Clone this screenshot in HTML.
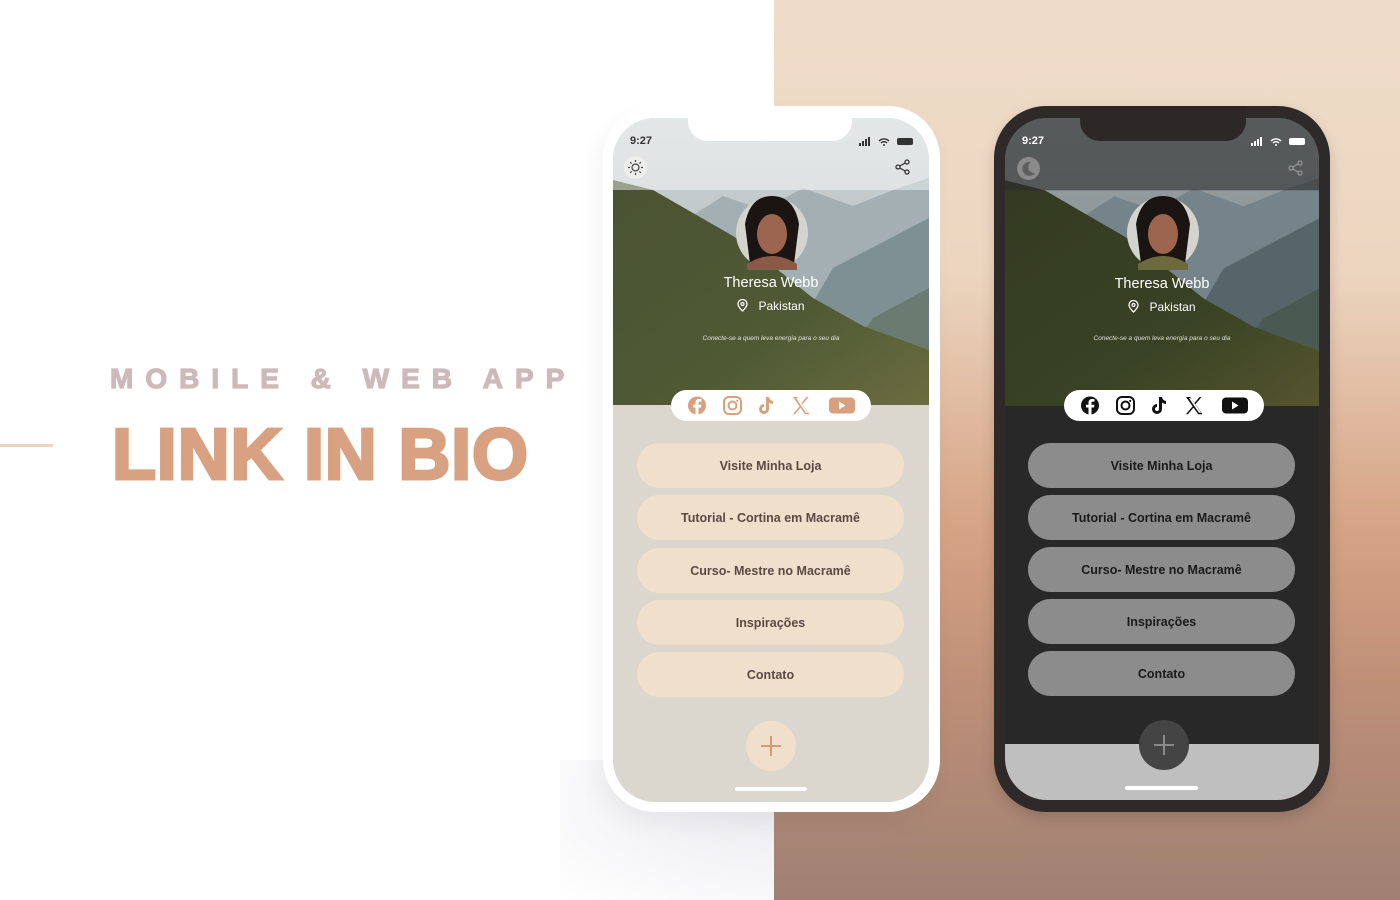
<!DOCTYPE html>
<html><head><meta charset="utf-8"><style>
*{margin:0;padding:0;box-sizing:border-box}
body{width:1400px;height:900px;position:relative;overflow:hidden;background:#fff;font-family:"Liberation Sans",sans-serif}
.abs{position:absolute}
.rp{left:774px;top:0;width:626px;height:900px;background:linear-gradient(180deg,#eedcc8 0%,#ecd6c0 30%,#d6a486 58%,#c09078 75%,#9f8173 100%)}
.shadowL{left:560px;top:760px;width:214px;height:140px;background:radial-gradient(ellipse at 100% 30%,#ecebee 0%,#f3f2f5 40%,#fff 100%)}
.frame{border-radius:52px}
.btn{position:absolute;height:45px;border-radius:23px;font-size:12.5px;font-weight:bold;display:flex;align-items:center;justify-content:center}
.l .btn{background:#f0dfcb;color:#5a4a44;left:24px;width:267px}
.d .btn{background:#8c8c8c;color:#1a1a1a;left:23px;width:267px}
.screen{overflow:hidden;border-radius:42px}
.name{position:absolute;width:100%;text-align:center;color:#fff;font-size:14.5px;top:157px}
.loc{position:absolute;width:100%;text-align:center;color:#fff;font-size:12px;top:181px}
.tag{position:absolute;width:100%;text-align:center;color:#f2f2f2;font-size:6.5px;font-style:italic;top:217px;opacity:.9}
.time{position:absolute;left:17px;top:17px;font-size:11px;font-weight:bold}
</style></head><body>
<div class="abs rp"></div>
<div class="abs shadowL"></div>

<div class="abs" style="left:0;top:444px;width:53px;height:3px;background:#efd2bf"></div>
<div class="abs" style="left:110px;top:364px;font-size:28px;line-height:30px;font-weight:bold;letter-spacing:12px;color:#cdb9b9;white-space:nowrap;-webkit-text-stroke:1.2px #cdb9b9">MOBILE &amp; WEB APP</div>
<div class="abs" style="left:112px;top:418px;font-size:72px;line-height:74px;font-weight:bold;letter-spacing:0.8px;color:#d8a181;white-space:nowrap;-webkit-text-stroke:3px #d8a181">LINK IN BIO</div>

<!-- LIGHT PHONE -->
<div class="abs frame" style="left:603px;top:106px;width:337px;height:706px;background:#fff;box-shadow:-6px 12px 24px rgba(0,0,0,.05)"></div>
<div class="abs screen l" style="left:613px;top:118px;width:316px;height:684px;background:#dbd7ce">
<svg class="abs" style="left:0;top:0" width="316" height="287" viewBox="0 0 316 287" preserveAspectRatio="none">
<defs><linearGradient id="sk" x1="0" y1="0" x2="0" y2="1"><stop offset="0" stop-color="#ced3d3"/><stop offset="1" stop-color="#a8b4b8"/></linearGradient>
<linearGradient id="fo" x1="0" y1="0" x2="1" y2="1"><stop offset="0" stop-color="#4a5233"/><stop offset=".6" stop-color="#4f5a34"/><stop offset="1" stop-color="#6b6c40"/></linearGradient></defs>
<rect width="316" height="287" fill="url(#sk)"/>
<polygon points="60,110 110,78 150,92 190,70 240,88 280,72 316,60 316,287 60,287" fill="#a3afb3"/>
<polygon points="140,287 220,150 316,100 316,287" fill="#7e9094"/>
<polygon points="200,287 260,200 316,170 316,287" fill="#6a7c72"/>
<polygon points="0,62 40,72 80,95 120,118 160,148 200,180 250,208 316,232 316,287 0,287" fill="url(#fo)"/>
<rect width="316" height="72" fill="#fff" opacity=".45"/>
</svg>
<div class="time" style="color:#333">9:27</div>
<svg class="abs" style="left:246px;top:19px" width="58" height="10"><rect x="0" y="6" width="2" height="3" fill="#333"/><rect x="3" y="4" width="2" height="5" fill="#333"/><rect x="6" y="2" width="2" height="7" fill="#333"/><rect x="9" y="0" width="2" height="9" fill="#333"/><path d="M20 4a7 7 0 0 1 10 0M22 6a4 4 0 0 1 6 0" stroke="#333" stroke-width="1.4" fill="none"/><circle cx="25" cy="8" r="1" fill="#333"/><rect x="38" y="1" width="16" height="7" rx="2" fill="#333"/></svg>
<div class="abs" style="left:11px;top:38px;width:23px;height:23px;border-radius:50%;background:#eeeeec"></div>
<svg class="abs" style="left:13px;top:40px" width="19" height="19" viewBox="0 0 19 19" stroke="#444" stroke-width="1.2" fill="none"><circle cx="9.5" cy="9.5" r="3.5"/><path d="M9.5 2v2M9.5 15v2M2 9.5h2M15 9.5h2M4.2 4.2l1.4 1.4M13.4 13.4l1.4 1.4M4.2 14.8l1.4-1.4M13.4 5.6l1.4-1.4"/></svg>
<svg class="abs" style="left:282px;top:41px" width="16" height="16" viewBox="0 0 16 16" stroke="#333" stroke-width="1.3" fill="none"><circle cx="12" cy="3" r="2"/><circle cx="3" cy="8" r="2"/><circle cx="12" cy="13" r="2"/><path d="M5 7l5-3M5 9l5 3"/></svg>
<svg class="abs" style="left:122px;top:76px" width="74" height="76" viewBox="0 0 74 76"><circle cx="37" cy="39" r="36" fill="#d3d4cd"/><path d="M10 30q5-28 27-28t27 28l-5 40h-44z" fill="#1a1412"/><ellipse cx="37" cy="40" rx="15" ry="20" fill="#9b6550"/><path d="M12 70q25-16 50 0v6h-50z" fill="#8a5a48"/></svg>
<div class="name">Theresa Webb</div>
<div class="loc"><svg width="11" height="13" viewBox="0 0 11 13" style="vertical-align:-2px;margin-right:10px"><path d="M5.5 12s-4.5-4-4.5-7a4.5 4.5 0 0 1 9 0c0 3-4.5 7-4.5 7z" stroke="#fff" stroke-width="1.3" fill="none"/><circle cx="5.5" cy="5" r="1.5" stroke="#fff" stroke-width="1.2" fill="none"/></svg>Pakistan</div>
<div class="tag">Conecte-se a quem leva energia para o seu dia</div>
<div class="abs" style="left:58px;top:272px;width:200px;height:31px;border-radius:16px;background:#fff"></div>
<svg class="abs" style="left:58px;top:272px" width="200" height="31" viewBox="0 0 200 31">
<g fill="#d9a07e"><circle cx="26" cy="15.5" r="9"/><path d="M27.5 24.5v-7h2.5l.4-2.8h-2.9v-1.8c0-.8.3-1.3 1.4-1.3h1.6v-2.5a18 18 0 0 0-2.3-.1c-2.3 0-3.7 1.3-3.7 3.8v1.9h-2.5v2.8h2.5v7z" fill="#fff"/>
<rect x="53" y="7" width="17" height="17" rx="5" fill="none" stroke="#d9a07e" stroke-width="2"/><circle cx="61.5" cy="15.5" r="4" fill="none" stroke="#d9a07e" stroke-width="2"/><circle cx="66.2" cy="10.8" r="1.1"/>
<path d="M95 7h3a4.5 4.5 0 0 0 4 4v3a7 7 0 0 1-4-1.4v6.4a5 5 0 1 1-5-5v3a2 2 0 1 0 2 2z"/>
<path d="M122 7h4.2l4.3 6 5-6h2l-6.1 7.2 7 10h-4.2l-4.7-6.6-5.6 6.6h-2l6.7-7.8z M125 8.2h2l10 14.6h-2z" fill-rule="evenodd"/>
<rect x="158" y="7.5" width="26" height="16" rx="4"/><path d="M168 11.5v8l6.5-4z" fill="#fff"/></g>
</svg>
<div class="btn" style="top:325px">Visite Minha Loja</div>
<div class="btn" style="top:377px">Tutorial - Cortina em Macramê</div>
<div class="btn" style="top:430px">Curso- Mestre no Macramê</div>
<div class="btn" style="top:482px">Inspirações</div>
<div class="btn" style="top:534px">Contato</div>
<div class="abs" style="left:133px;top:603px;width:50px;height:50px;border-radius:50%;background:#f0dfcb"></div>
<div class="abs" style="left:148px;top:627px;width:20px;height:2px;background:#d49a78"></div>
<div class="abs" style="left:157px;top:618px;width:2px;height:20px;background:#d49a78"></div>
<div class="abs" style="left:122px;top:669px;width:72px;height:4px;border-radius:2px;background:#fff"></div>
</div>
<div class="abs" style="left:688px;top:106px;width:164px;height:35px;background:#fff;border-radius:0 0 20px 20px"></div>

<!-- DARK PHONE -->
<div class="abs frame" style="left:994px;top:106px;width:336px;height:706px;background:#2e2a2a;box-shadow:0 6px 14px rgba(0,0,0,.15)"></div>
<div class="abs screen d" style="left:1005px;top:118px;width:314px;height:682px;background:#282828">
<svg class="abs" style="left:0;top:0" width="314" height="288" viewBox="0 0 316 287" preserveAspectRatio="none">
<defs><linearGradient id="sk2" x1="0" y1="0" x2="0" y2="1"><stop offset="0" stop-color="#9aa2a4"/><stop offset="1" stop-color="#78858a"/></linearGradient>
<linearGradient id="fo2" x1="0" y1="0" x2="1" y2="1"><stop offset="0" stop-color="#333a22"/><stop offset=".6" stop-color="#394224"/><stop offset="1" stop-color="#55552f"/></linearGradient></defs>
<rect width="316" height="287" fill="url(#sk2)"/>
<polygon points="60,110 110,78 150,92 190,70 240,88 280,72 316,60 316,287 60,287" fill="#75838a"/>
<polygon points="140,287 220,150 316,100 316,287" fill="#55656a"/>
<polygon points="200,287 260,200 316,170 316,287" fill="#4a5a52"/>
<polygon points="0,62 40,72 80,95 120,118 160,148 200,180 250,208 316,232 316,287 0,287" fill="url(#fo2)"/>
<rect width="316" height="72" fill="#2b2b2b" opacity=".6"/>
</svg>
<div class="time" style="color:#fff">9:27</div>
<svg class="abs" style="left:246px;top:19px" width="58" height="10"><rect x="0" y="6" width="2" height="3" fill="#fff"/><rect x="3" y="4" width="2" height="5" fill="#fff"/><rect x="6" y="2" width="2" height="7" fill="#fff"/><rect x="9" y="0" width="2" height="9" fill="#fff"/><path d="M20 4a7 7 0 0 1 10 0M22 6a4 4 0 0 1 6 0" stroke="#fff" stroke-width="1.4" fill="none"/><circle cx="25" cy="8" r="1" fill="#fff"/><rect x="38" y="1" width="16" height="7" rx="2" fill="#fff"/></svg>
<div class="abs" style="left:12px;top:39px;width:23px;height:23px;border-radius:50%;background:#8a8a8a"></div>
<svg class="abs" style="left:12px;top:39px" width="23" height="23" viewBox="0 0 23 23"><path d="M14 5a7 7 0 1 0 4 11a6 6 0 0 1-4-11z" fill="#5e5e5e"/></svg>
<svg class="abs" style="left:283px;top:42px" width="16" height="16" viewBox="0 0 16 16" stroke="#999" stroke-width="1.2" fill="none"><circle cx="12" cy="3" r="2"/><circle cx="3" cy="8" r="2"/><circle cx="12" cy="13" r="2"/><path d="M5 7l5-3M5 9l5 3"/></svg>
<svg class="abs" style="left:121px;top:76px" width="74" height="76" viewBox="0 0 74 76"><circle cx="37" cy="39" r="36" fill="#d3d4cd"/><path d="M10 30q5-28 27-28t27 28l-5 40h-44z" fill="#1a1412"/><ellipse cx="37" cy="40" rx="15" ry="20" fill="#9b6550"/><path d="M12 70q25-16 50 0v6h-50z" fill="#6e6a40"/></svg>
<div class="name" style="top:158px">Theresa Webb</div>
<div class="loc" style="top:182px"><svg width="11" height="13" viewBox="0 0 11 13" style="vertical-align:-2px;margin-right:10px"><path d="M5.5 12s-4.5-4-4.5-7a4.5 4.5 0 0 1 9 0c0 3-4.5 7-4.5 7z" stroke="#fff" stroke-width="1.3" fill="none"/><circle cx="5.5" cy="5" r="1.5" stroke="#fff" stroke-width="1.2" fill="none"/></svg>Pakistan</div>
<div class="tag">Conecte-se a quem leva energia para o seu dia</div>
<div class="abs" style="left:59px;top:272px;width:200px;height:31px;border-radius:16px;background:#fff"></div>
<svg class="abs" style="left:59px;top:272px" width="200" height="31" viewBox="0 0 200 31">
<g fill="#111"><circle cx="26" cy="15.5" r="9"/><path d="M27.5 24.5v-7h2.5l.4-2.8h-2.9v-1.8c0-.8.3-1.3 1.4-1.3h1.6v-2.5a18 18 0 0 0-2.3-.1c-2.3 0-3.7 1.3-3.7 3.8v1.9h-2.5v2.8h2.5v7z" fill="#fff"/>
<rect x="53" y="7" width="17" height="17" rx="5" fill="none" stroke="#111" stroke-width="2"/><circle cx="61.5" cy="15.5" r="4" fill="none" stroke="#111" stroke-width="2"/><circle cx="66.2" cy="10.8" r="1.1"/>
<path d="M95 7h3a4.5 4.5 0 0 0 4 4v3a7 7 0 0 1-4-1.4v6.4a5 5 0 1 1-5-5v3a2 2 0 1 0 2 2z"/>
<path d="M122 7h4.2l4.3 6 5-6h2l-6.1 7.2 7 10h-4.2l-4.7-6.6-5.6 6.6h-2l6.7-7.8z M125 8.2h2l10 14.6h-2z" fill-rule="evenodd"/>
<rect x="158" y="7.5" width="26" height="16" rx="4"/><path d="M168 11.5v8l6.5-4z" fill="#fff"/></g>
</svg>
<div class="btn" style="top:325px">Visite Minha Loja</div>
<div class="btn" style="top:377px">Tutorial - Cortina em Macramê</div>
<div class="btn" style="top:429px">Curso- Mestre no Macramê</div>
<div class="btn" style="top:481px">Inspirações</div>
<div class="btn" style="top:533px">Contato</div>
<div class="abs" style="left:0;top:626px;width:314px;height:56px;background:#bfbfbf"></div>
<div class="abs" style="left:134px;top:602px;width:50px;height:50px;border-radius:50%;background:#444"></div>
<div class="abs" style="left:149px;top:626px;width:20px;height:2px;background:#8a8a8a"></div>
<div class="abs" style="left:158px;top:617px;width:2px;height:20px;background:#8a8a8a"></div>
<div class="abs" style="left:120px;top:668px;width:73px;height:4px;border-radius:2px;background:#fff"></div>
</div>
<div class="abs" style="left:1080px;top:106px;width:166px;height:35px;background:#2c2828;border-radius:0 0 20px 20px"></div>
</body></html>
